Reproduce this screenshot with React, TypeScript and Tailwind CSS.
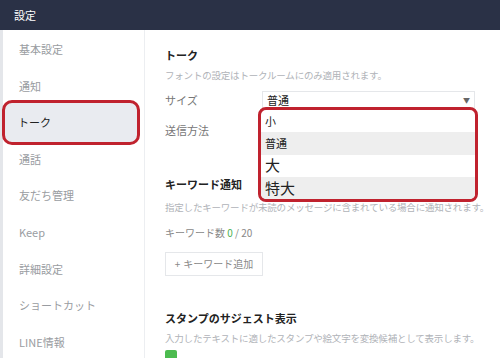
import React from 'react';

const FONT = { fontFamily: '"Noto Sans CJK JP", "Noto Sans", sans-serif' };

const MENU = ['基本設定', '通知', 'トーク', '通話', '友だち管理', 'Keep', '詳細設定', 'ショートカット', 'LINE情報'];

export default function App() {
  return (
    <div className="w-[500px] h-[358px] overflow-hidden bg-white flex flex-col" style={FONT}>
      <div className="h-[30px] shrink-0 bg-[#2a3146] flex items-center px-[14px] text-[11px] text-white">設定</div>
      <div className="flex flex-1 min-h-0">
        <div className="w-[3px] bg-[#e4e6ea]" />
        <nav className="w-[142px] shrink-0 border-r border-[#eceef1] flex flex-col pt-[1px]">
          {MENU.map((m) => {
            const active = m === 'トーク';
            return (
              <div key={m} className="h-[36.6px] shrink-0 flex items-center">
                {active ? (
                  <div className="w-[138px] h-[45px] -ml-[1px] rounded-[10px] border-[3px] border-[#c0222e] bg-[#e9ebf0] flex items-center px-[13px] text-[11px] text-[#222]">
                    {m}
                  </div>
                ) : (
                  <span className="px-[16px] text-[11px] text-[#999ca1]">{m}</span>
                )}
              </div>
            );
          })}
        </nav>
        <main className="relative flex-1 min-w-0 overflow-hidden pl-[20px] pr-[25px] pt-[17px] leading-[16px]">
          <div className="text-[11px] font-bold text-[#222]">トーク</div>
          <div className="mt-[4px] text-[9.5px] tracking-[-0.2px] text-[#b0b3b8] whitespace-nowrap">フォントの設定はトークルームにのみ適用されます。</div>
          <div className="mt-[8px] flex items-center h-[18px]">
            <span className="w-[97px] shrink-0 text-[11px] text-[#777]">サイズ</span>
            <div className="flex-1 h-[18px] border border-[#e5e7ea] flex items-center justify-between px-[4px] text-[11px] text-[#222]">
              <span>普通</span>
              <span className="text-[7px] text-[#666]">▼</span>
            </div>
          </div>
          <div className="mt-[13px] text-[11px] text-[#777]">送信方法</div>

          <div className="mt-[38px] text-[11px] font-bold text-[#222]">キーワード通知</div>
          <div className="mt-[7px] text-[9.5px] tracking-[-0.2px] text-[#b0b3b8] whitespace-nowrap">指定したキーワードが未読のメッセージに含まれている場合に通知されます。</div>
          <div className="mt-[10px] text-[10px] text-[#888]">
            キーワード数 <span className="text-[#4caf50]">0</span> / 20
          </div>
          <button className="mt-[11px] h-[24px] w-[98px] border border-[#e5e7ea] text-[10px] text-[#888] flex items-center justify-center gap-[3px]">
            <span>+</span>キーワード追加
          </button>

          <div className="mt-[34px] text-[11px] font-bold text-[#222]">スタンプのサジェスト表示</div>
          <div className="mt-[4px] text-[9.5px] tracking-[-0.2px] text-[#b0b3b8] whitespace-nowrap">入力したテキストに適したスタンプや絵文字を変換候補として表示します。</div>
          <div className="mt-[4px] w-[12px] h-[12px] bg-[#4cbb4f] rounded-[2px]" />

          <div className="absolute left-[113px] top-[77px] w-[220px] h-[95px] rounded-[8px] border-[3px] border-[#c0222e] bg-white overflow-hidden flex flex-col text-[#222] leading-normal">
            <div className="h-[22px] flex items-center px-[4px] text-[11px]">小</div>
            <div className="h-[23px] flex items-center px-[4px] text-[11px] bg-[#eeeeee]">普通</div>
            <div className="h-[22px] flex items-center px-[4px] text-[15px]">大</div>
            <div className="flex-1 flex items-center px-[4px] text-[15px] bg-[#eeeeee]">特大</div>
          </div>
        </main>
      </div>
    </div>
  );
}
